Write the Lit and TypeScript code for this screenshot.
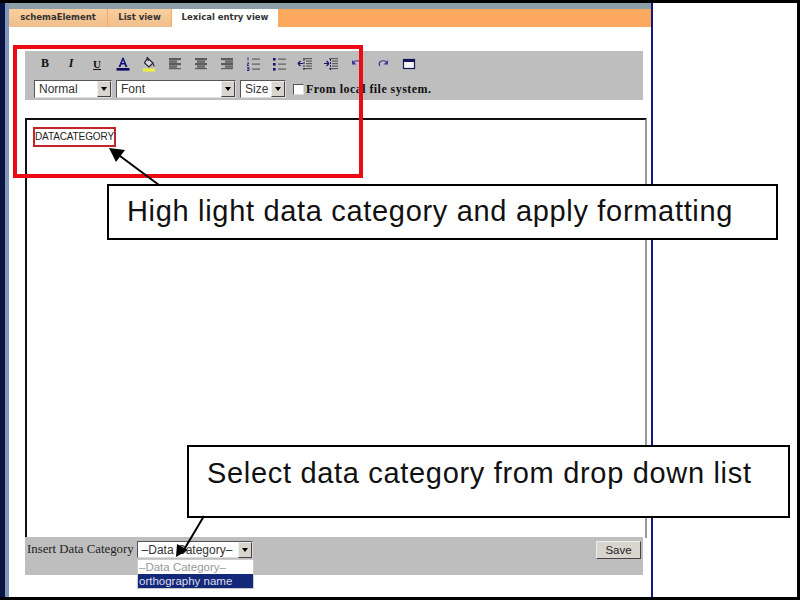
import { LitElement, html, css, svg } from "lit";
import { customElement } from "lit/decorators.js";

const ico = (body: unknown) => html`<span class="ico"><svg width="16" height="16" viewBox="0 0 16 16">${body}</svg></span>`;
const lines = (rows: number[][], c = "#5c5c5c") =>
  rows.map(([x, y, w]) => svg`<rect x=${x} y=${y} width=${w} height="1.2" fill=${c}></rect>`);

const indentLines = [[6, 2, 9], [9, 4.5, 6], [9, 7, 6], [9, 9.5, 6], [6, 12, 9]];

const icons = [
  html`<span class="ico txt b">B</span>`,
  html`<span class="ico txt i">I</span>`,
  html`<span class="ico txt u">U</span>`,
  ico(svg`<path d="M3.5 11 L7.5 1.5 h1 L12.5 11 h-2 l-.9-2.5 h-3.2 L5.5 11z M7 7 h2 L8 4z" fill="#14147a" fill-rule="evenodd"></path><rect x="1.5" y="12" width="13" height="2.6" fill="#0a0a60"></rect>`),
  ico(svg`<path d="M6.5 2 L12 7 L8 11 L3.5 7z" fill="#d8d8e0" stroke="#223" stroke-width="1.2"></path><path d="M6 1 l1.5 4" stroke="#223" stroke-width="1.2"></path><path d="M12 7 q2 2 1.5 3.5 q-2 0 -1.5 -3.500z" fill="#223"></path><rect x="2" y="12.5" width="12" height="3" fill="#f2ee3c"></rect>`),
  ico(lines([[2, 2, 12], [2, 3, 12], [2, 4.5, 8], [2, 5.5, 8], [2, 7, 12], [2, 8, 12], [2, 9.5, 8], [2, 10.5, 8], [2, 12, 12]])),
  ico(lines([[2, 2, 12], [2, 3, 12], [4, 4.5, 8], [4, 5.5, 8], [2, 7, 12], [2, 8, 12], [4, 9.5, 8], [4, 10.5, 8], [2, 12, 12]])),
  ico(lines([[2, 2, 12], [2, 3, 12], [6, 4.5, 8], [6, 5.5, 8], [2, 7, 12], [2, 8, 12], [6, 9.5, 8], [6, 10.5, 8], [2, 12, 12]])),
  ico(svg`<path d="M3 1.5 v3 M2 7 h2 l-2 2.500 h2 M2 11.500 h2 v3 h-2 M2 13 h2" stroke="#2a2a90" stroke-width="1" fill="none"></path>${lines([[7, 2.5, 8], [7, 7.5, 8], [7, 12.5, 8]])}`),
  ico(svg`<rect x="2" y="2" width="2.6" height="2.6" fill="#14146a"></rect><rect x="2" y="7" width="2.6" height="2.6" fill="#14146a"></rect><rect x="2" y="12" width="2.6" height="2.6" fill="#14146a"></rect>${lines([[7, 2.5, 8], [7, 7.5, 8], [7, 12.5, 8]])}`),
  ico(svg`${lines(indentLines)}<path d="M1 7.5 h5 M1 7.500 l2.500 -2.500 M1 7.500 l2.500 2.500" stroke="#14146a" stroke-width="1.200" fill="none"></path><path d="M7 3 v11" stroke="#14146a" stroke-width="1" stroke-dasharray="2 1"></path>`),
  ico(svg`${lines(indentLines)}<path d="M1 7.5 h5 M6 7.500 l-2.500 -2.500 M6 7.500 l-2.500 2.500" stroke="#14146a" stroke-width="1.200" fill="none"></path><path d="M7.500 3 v11" stroke="#14146a" stroke-width="1" stroke-dasharray="2 1"></path>`),
  ico(svg`<path d="M4.500 6 q3.500 -2.500 6.500 0 q1.800 2 0 4" stroke="#3a3a9a" stroke-width="1.200" fill="none"></path><path d="M3 4 v4.500 h4.500z" fill="#3a3a9a"></path>`),
  ico(svg`<path d="M11.500 6 q-3.500 -2.500 -6.500 0 q-1.800 2 0 4" stroke="#3a3a9a" stroke-width="1.200" fill="none"></path><path d="M13 4 v4.500 h-4.500z" fill="#3a3a9a"></path>`),
  ico(svg`<rect x="2.500" y="3.500" width="11" height="9" fill="#f4f4f4" stroke="#14145a" stroke-width="1.200"></rect><rect x="2" y="3" width="12" height="3" fill="#14145a"></rect>`),
];

@customElement("app-root")
export class AppRoot extends LitElement {
  static styles = css`
    :host { display: block; width: 800px; height: 600px; position: relative; overflow: hidden; font-family: "Liberation Sans", Arial, sans-serif; }
    .frame { width: 800px; height: 600px; box-sizing: border-box; background: #000; padding: 3px 3px 3px 0; display: flex; }
    .edge { width: 9px; flex: none; background: linear-gradient(90deg, #0a1440 0, #0a1440 5px, #7f97bd 5px); }
    .main { width: 642px; flex: none; background: #fff; display: flex; flex-direction: column; }
    .rule { width: 2px; flex: none; background: #14148c; }
    .side { flex: 1; background: #fff; }
    .strip { height: 6px; background: #8c9ea6; }
    .tabs { height: 18px; background: #fca95f; display: flex; gap: 1px; font: bold 8.5px "DejaVu Sans", sans-serif; color: #333; }
    .tab { display: flex; align-items: center; justify-content: center; background: linear-gradient(#fbcf9f, #efbd8b); padding-bottom: 2px; box-sizing: border-box; }
    .tab.one { width: 98px; }
    .tab.two { width: 63px; }
    .tab.on { width: 106px; background: #fff; }
    .body { flex: 1; padding: 24px 8px 0 16px; display: flex; flex-direction: column; }
    .toolbar { width: 618px; height: 49px; background: #bebebe; box-sizing: border-box; padding: 3px 0 0 7px; display: flex; flex-direction: column; }
    .row { display: flex; align-items: center; }
    .row.icons { height: 19px; }
    .ico { width: 26px; height: 19px; display: flex; align-items: center; justify-content: center; flex: none; }
    .txt { font: 11px "Liberation Serif", serif; color: #111; }
    .b { font-weight: bold; font-size: 12px; }
    .i { font-style: italic; font-weight: bold; font-size: 12px; }
    .u { text-decoration: underline; font-weight: bold; font-size: 11px; }
    .row.selects { gap: 4px; margin-left: 2px; margin-top: 7px; }
    .sel { height: 18px; box-sizing: border-box; background: #fff; border: 1px solid; border-color: #555 #ddd #ddd #555; display: flex; align-items: center; justify-content: space-between; font-size: 12px; color: #333; padding: 0 0 0 4px; }
    .arrow { width: 14px; height: 16px; box-sizing: border-box; background: #d8d5ce; border: 1px solid; border-color: #eee #444 #444 #eee; display: flex; align-items: center; justify-content: center; flex: none; }
    .arrow::after { content: ""; border: 3px solid transparent; border-top: 4px solid #000; border-bottom: 0; }
    .check { width: 11px; height: 11px; box-sizing: border-box; background: #fff; border: 1px solid; border-color: #555 #ddd #ddd #555; margin-left: 3px; margin-right: -2px; }
    .fls { font: bold 12px "Liberation Serif", serif; color: #111; white-space: nowrap; letter-spacing: 0.45px; }
    .editor { width: 622px; height: 420px; margin-top: 18px; box-sizing: border-box; border: 2px solid #111; border-right-color: #999; border-bottom: 0; padding: 11px 8px; flex: none; font-size: 10px; letter-spacing: -0.12px; color: #222; }
    .foot { width: 618px; height: 38px; margin-top: -1px; background: #bebebe; box-sizing: border-box; padding: 4px 2px 0 2px; display: flex; align-items: flex-start; justify-content: space-between; }
    .ins { display: flex; align-items: flex-start; gap: 3px; }
    .ins span { font: 12.8px "Liberation Serif", serif; color: #222; line-height: 16px; white-space: nowrap; }
    .dd { width: 116px; height: 17px; }
    .save { width: 45px; height: 18px; box-sizing: border-box; background: #d8d5ce; border: 1px solid; border-color: #eee #444 #444 #eee; font-size: 11.5px; color: #222; display: flex; align-items: center; justify-content: center; }
    .list { position: absolute; left: 137px; top: 559px; width: 117px; box-sizing: border-box; background: #fff; border: 1px solid #ccc; font-size: 11.5px; line-height: 14px; color: #999; }
    .list div { padding-left: 1px; height: 14px; white-space: nowrap; }
    .list .hl { background: #14287a; color: #dde; }
    .red { position: absolute; box-sizing: border-box; border: 4px solid #ec0a14; left: 13px; top: 45px; width: 350px; height: 133px; pointer-events: none; }
    .redsm { position: absolute; box-sizing: border-box; border: 2px solid #c4242c; left: 33px; top: 127px; width: 83px; height: 20px; }
    .note { position: absolute; box-sizing: border-box; background: #fff; border: 2px solid #000; color: #111; white-space: nowrap; padding-left: 18px; font-size: 29px; letter-spacing: 0.68px; }
    .n1 { left: 107px; top: 184px; width: 671px; height: 56px; padding-top: 9px; }
    .n2 { left: 187px; top: 445px; width: 603px; height: 73px; padding-top: 10px; }
    .arrows { position: absolute; left: 0; top: 0; }
  `;

  render() {
    return html`
      <div class="frame">
        <div class="edge"></div>
        <div class="main">
          <div class="strip"></div>
          <div class="tabs">
            <div class="tab one">schemaElement</div>
            <div class="tab two">List view</div>
            <div class="tab on">Lexical entry view</div>
          </div>
          <div class="body">
            <div class="toolbar">
              <div class="row icons">${icons}</div>
              <div class="row selects">
                <div class="sel" style="width:78px">Normal<span class="arrow"></span></div>
                <div class="sel" style="width:120px">Font<span class="arrow"></span></div>
                <div class="sel" style="width:46px">Size<span class="arrow"></span></div>
                <span class="check"></span>
                <span class="fls">From local file system.</span>
              </div>
            </div>
            <div class="editor">DATACATEGORY</div>
            <div class="foot">
              <div class="ins"><span>Insert Data Category</span>
                <div class="sel dd">–Data Category–<span class="arrow"></span></div>
              </div>
              <div class="save">Save</div>
            </div>
          </div>
        </div>
        <div class="rule"></div>
        <div class="side"></div>
      </div>
      <div class="list"><div>–Data Category–</div><div class="hl">orthography name</div></div>
      <div class="red"></div>
      <div class="redsm"></div>
      <div class="note n1">High light data category and apply formatting</div>
      <div class="note n2">Select data category from drop down list</div>
      <svg class="arrows" width="800" height="600" viewBox="0 0 800 600">
        <path d="M159 185 L120 156" stroke="#000" stroke-width="2"></path>
        <path d="M109 148 L125 150 L116 162z" fill="#000"></path>
        <path d="M204 516 L182 553" stroke="#000" stroke-width="2"></path>
        <path d="M176 557 L177 544 L188 550z" fill="#000"></path>
      </svg>
    `;
  }
}
